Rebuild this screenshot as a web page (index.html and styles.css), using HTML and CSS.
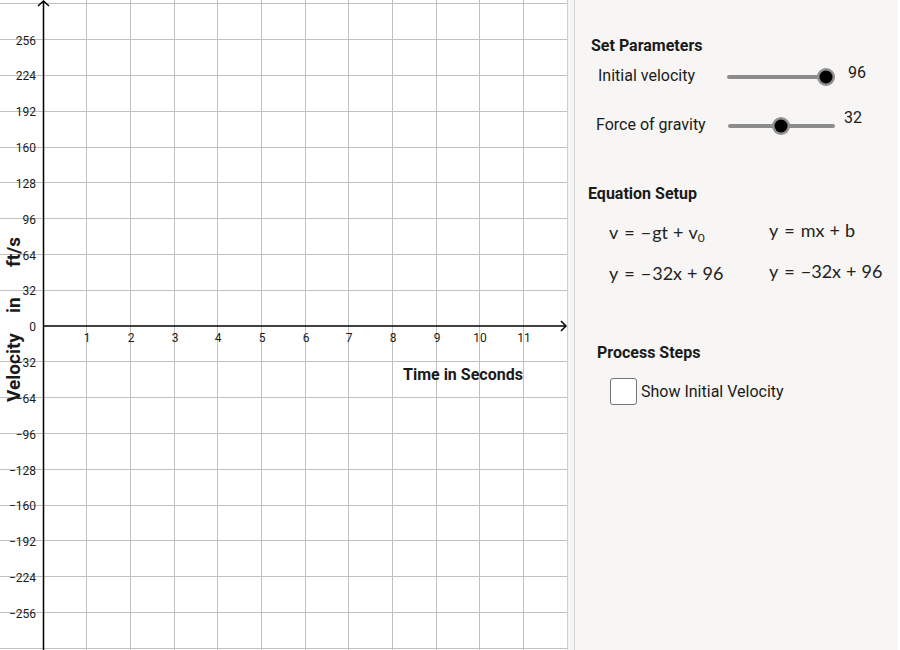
FILE: index.html
```html
<!DOCTYPE html>
<html>
<head>
<meta charset="utf-8">
<link rel="stylesheet" href="styles.css">
</head>
<body>
<div class="app">
  <div class="graph">
    <svg class="plot" width="567" height="650" viewBox="0 0 567 650">
      <g class="grid">
        <line x1="86.5" y1="0" x2="86.5" y2="650"/>
        <line x1="130.5" y1="0" x2="130.5" y2="650"/>
        <line x1="174.5" y1="0" x2="174.5" y2="650"/>
        <line x1="217.5" y1="0" x2="217.5" y2="650"/>
        <line x1="261.5" y1="0" x2="261.5" y2="650"/>
        <line x1="305.5" y1="0" x2="305.5" y2="650"/>
        <line x1="348.5" y1="0" x2="348.5" y2="650"/>
        <line x1="392.5" y1="0" x2="392.5" y2="650"/>
        <line x1="436.5" y1="0" x2="436.5" y2="650"/>
        <line x1="479.5" y1="0" x2="479.5" y2="650"/>
        <line x1="523.5" y1="0" x2="523.5" y2="650"/>
        <line x1="0" y1="3.5" x2="567" y2="3.5"/>
        <line x1="0" y1="39.5" x2="567" y2="39.5"/>
        <line x1="0" y1="75.5" x2="567" y2="75.5"/>
        <line x1="0" y1="111.5" x2="567" y2="111.5"/>
        <line x1="0" y1="147.5" x2="567" y2="147.5"/>
        <line x1="0" y1="182.5" x2="567" y2="182.5"/>
        <line x1="0" y1="218.5" x2="567" y2="218.5"/>
        <line x1="0" y1="254.5" x2="567" y2="254.5"/>
        <line x1="0" y1="290.5" x2="567" y2="290.5"/>
        <line x1="0" y1="361.5" x2="567" y2="361.5"/>
        <line x1="0" y1="397.5" x2="567" y2="397.5"/>
        <line x1="0" y1="433.5" x2="567" y2="433.5"/>
        <line x1="0" y1="469.5" x2="567" y2="469.5"/>
        <line x1="0" y1="505.5" x2="567" y2="505.5"/>
        <line x1="0" y1="540.5" x2="567" y2="540.5"/>
        <line x1="0" y1="576.5" x2="567" y2="576.5"/>
        <line x1="0" y1="612.5" x2="567" y2="612.5"/>
        <line x1="0" y1="648.5" x2="567" y2="648.5"/>
      </g>
      <g class="axes">
        <line x1="43.5" y1="1" x2="43.5" y2="650"/>
        <line x1="43" y1="326" x2="566" y2="326"/>
        <polyline points="38,6 43.5,1 49,6"/>
        <polyline points="561,321 566,326 561,331"/>
      </g>
      <g class="ylab">
        <text x="36" y="44.5">256</text>
        <text x="36" y="80">224</text>
        <text x="36" y="116">192</text>
        <text x="36" y="152">160</text>
        <text x="36" y="187.5">128</text>
        <text x="36" y="223.5">96</text>
        <text x="36" y="259.5">64</text>
        <text x="36" y="295">32</text>
        <text x="36" y="330.5">0</text>
        <text x="36" y="366.5">−32</text>
        <text x="36" y="402.5">−64</text>
        <text x="36" y="438.5">−96</text>
        <text x="36" y="474.5">−128</text>
        <text x="36" y="510">−160</text>
        <text x="36" y="545.5">−192</text>
        <text x="36" y="581.5">−224</text>
        <text x="36" y="617.5">−256</text>
      </g>
      <g class="xlab">
        <text x="87" y="342">1</text>
        <text x="131" y="342">2</text>
        <text x="175" y="342">3</text>
        <text x="218" y="342">4</text>
        <text x="262" y="342">5</text>
        <text x="306" y="342">6</text>
        <text x="349" y="342">7</text>
        <text x="393" y="342">8</text>
        <text x="437" y="342">9</text>
        <text x="480" y="342">10</text>
        <text x="524" y="342">11</text>
      </g>
      <text class="axis-title" x="403" y="380">Time in Seconds</text>
      <g class="axis-title" transform="translate(20,402) rotate(-90)">
        <text x="0" y="0">Velocity</text>
        <text x="89" y="0">in</text>
        <text x="135" y="0">ft/s</text>
      </g>
    </svg>
  </div>
  <div class="divider"></div>
  <div class="panel">
    <div class="heading h-params">Set Parameters</div>
    <div class="slider-row row-v">
      <span class="label">Initial velocity</span>
      <svg class="slider" width="116" height="24" viewBox="0 0 116 24">
        <line class="track" x1="2" y1="13" x2="99" y2="13"/>
        <circle class="halo" cx="99" cy="13" r="9"/>
        <circle class="knob" cx="99" cy="13" r="6.5"/>
      </svg>
      <span class="value val-v">96</span>
    </div>
    <div class="slider-row row-g">
      <span class="label">Force of gravity</span>
      <svg class="slider" width="116" height="24" viewBox="0 0 116 24">
        <line class="track" x1="2" y1="13" x2="105" y2="13"/>
        <circle class="halo" cx="53" cy="13" r="9"/>
        <circle class="knob" cx="53" cy="13" r="6.5"/>
      </svg>
      <span class="value val-g">32</span>
    </div>

    <div class="heading h-eq">Equation Setup</div>
    <div class="eq-grid">
      <div class="eq eq-a"><i>v</i><span class="rel">=</span><span class="neg">−</span><i>gt</i><span class="bin">+</span><i>v</i><sub>0</sub></div>
      <div class="eq eq-b"><i>y</i><span class="rel">=</span><i>mx</i><span class="bin">+</span><i>b</i></div>
      <div class="eq eq-c"><i>y</i><span class="rel">=</span><span class="neg">−</span>32<i>x</i><span class="bin">+</span>96</div>
      <div class="eq eq-d"><i>y</i><span class="rel">=</span><span class="neg2">−</span>32<i>x</i><span class="bin">+</span>96</div>
    </div>

    <div class="heading h-steps">Process Steps</div>
    <label class="check-row">
      <span class="checkbox"></span>
      <span class="check-label">Show Initial Velocity</span>
    </label>
  </div>
</div>
</body>
</html>
```
FILE: styles.css
```css
html, body {
  margin: 0;
  padding: 0;
  background: #ffffff;
}
body {
  width: 900px;
  height: 650px;
  overflow: hidden;
  font-family: Roboto, "Liberation Sans", sans-serif;
  color: #1a1a1a;
}
.app {
  display: flex;
  width: 900px;
  height: 650px;
}
.graph {
  width: 567px;
  height: 650px;
  background: #ffffff;
  flex: none;
}
.plot {
  display: block;
}
.grid line {
  stroke: #c0c0c0;
  stroke-width: 1;
}
.axes line, .axes polyline {
  stroke: #000;
  stroke-width: 1.5;
  fill: none;
}
.ylab text {
  font-family: Roboto, sans-serif;
  font-size: 12px;
  text-anchor: end;
  fill: #1a1a1a;
}
.xlab text {
  font-family: Roboto, sans-serif;
  font-size: 12px;
  text-anchor: middle;
  fill: #1a1a1a;
}
.axis-title, .axis-title text {
  font-family: Roboto, sans-serif;
  font-weight: bold;
  font-size: 16px;
  fill: #1a1a1a;
}
g.axis-title text {
  font-size: 19px;
}
.divider {
  flex: none;
  width: 6px;
  height: 650px;
  background: #f4f4f4;
  border-left: 1px solid #cfcfcf;
  border-right: 1px solid #d6d6d6;
}
.panel {
  flex: none;
  width: 323px;
  height: 650px;
  background: #f7f6f5;
  display: flex;
  flex-direction: column;
  align-items: flex-start;
  font-size: 16px;
  line-height: 20px;
  color: #1a1a1a;
}
.heading {
  font-weight: bold;
  height: 20px;
}
.h-params { margin: 36px 0 0 16px; }
.slider-row {
  display: flex;
  align-items: center;
  height: 24px;
}
.row-v { margin: 8px 0 0 23px; }
.row-g { margin: 25px 0 0 21px; }
.row-v .label { width: 129px; }
.row-g .label { width: 132px; }
.slider { display: block; }
.track {
  stroke: #8c8c8c;
  stroke-width: 4;
  stroke-linecap: round;
}
.halo {
  fill: #8f8f8f;
}
.knob {
  fill: #000;
}
.value {
  position: relative;
}
.val-v { margin-left: 5px; top: -3px; }
.val-g { margin-left: 0; top: -7px; }

.h-eq { margin: 47px 0 0 13px; }
.eq-grid {
  display: grid;
  grid-template-columns: 160px auto;
  row-gap: 21px;
  margin: 18px 0 0 34px;
  font-family: Lato, "DejaVu Sans", sans-serif;
  font-size: 18px;
  line-height: 20px;
  color: #222;
}
.eq i { font-style: normal; }
.eq sub {
  font-size: 12px;
  line-height: 0;
  vertical-align: -3px;
}
.eq .rel { margin: 0 6px; }
.eq .bin { margin: 0 5px; }
.eq .neg { margin-right: 1px; }
.eq-b, .eq-d { position: relative; top: -2px; }

.h-steps { margin: 60px 0 0 22px; }
.check-row {
  display: flex;
  align-items: center;
  margin: 15px 0 0 35px;
}
.checkbox {
  display: block;
  width: 25px;
  height: 25px;
  border: 1.5px solid #747474;
  border-radius: 3px;
  background: #fff;
}
.check-label {
  margin-left: 4px;
}
```
